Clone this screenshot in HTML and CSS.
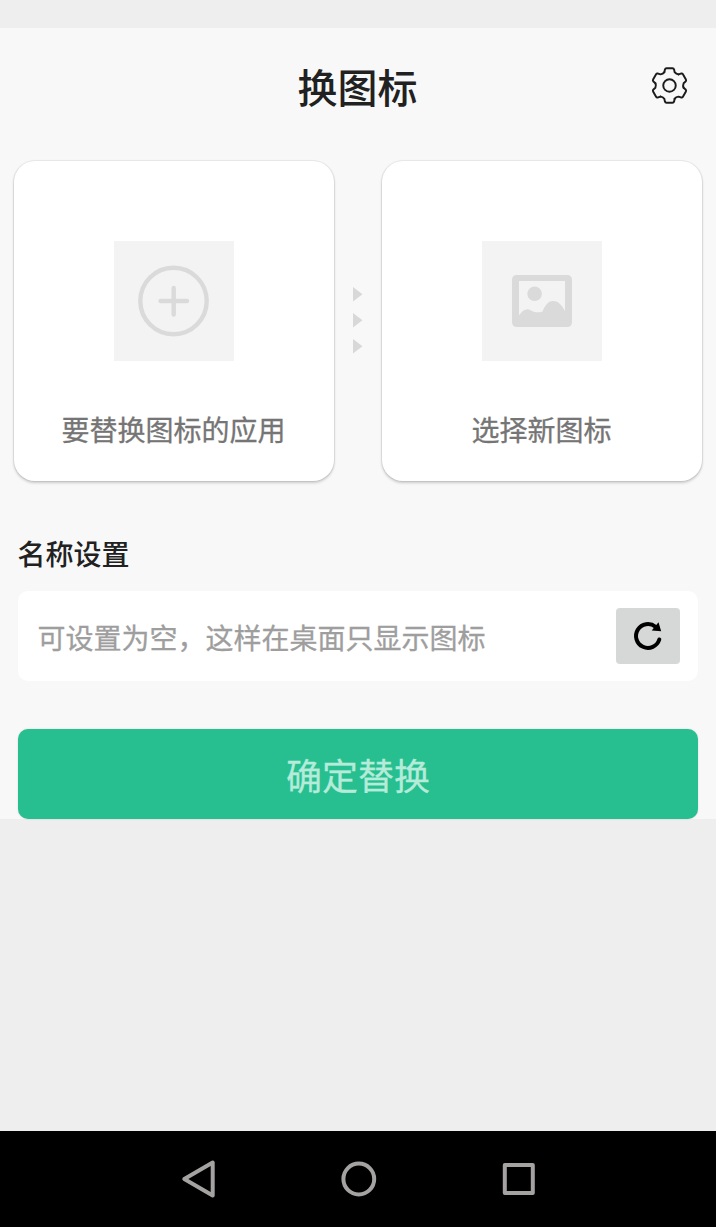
FILE: index.html
```html
<!DOCTYPE html>
<html lang="zh-CN">
<head>
<meta charset="utf-8">
<title>换图标</title>
<link rel="stylesheet" href="styles.css">
</head>
<body>
<div class="screen">
  <div class="status"></div>
  <main class="page">
    <header class="header">
      <h1 class="title">换图标</h1>
      <svg class="gear" viewBox="-20 -20 40 40">
        <defs><path id="tooth" d="M-5-13L-4.5-15.5Q-4.1-16.8-2.9-16.8H2.9Q4.1-16.8 4.5-15.5L5-13Q6.5-11 8.76-10.83"/></defs>
        <use href="#tooth"/><use href="#tooth" transform="rotate(60)"/><use href="#tooth" transform="rotate(120)"/>
        <use href="#tooth" transform="rotate(180)"/><use href="#tooth" transform="rotate(240)"/><use href="#tooth" transform="rotate(300)"/>
        <circle r="6.1"/>
      </svg>
    </header>
    <section class="cards">
      <div class="card">
        <div class="thumb">
          <svg viewBox="0 0 120 120"><g fill="none" stroke="#dadada" stroke-width="4.4" stroke-linecap="round"><circle cx="59.5" cy="60" r="33.2"/><path d="M46.5 60H73M59.7 47V73.500"/></g></svg>
        </div>
        <div class="caption">要替换图标的应用</div>
      </div>
      <svg class="arrows" viewBox="0 0 10 68"><path d="M0 0L9.500 7.300L0 14.600ZM0 26L9.500 33.300L0 40.600ZM0 52L9.500 59.300L0 66.600Z"/></svg>
      <div class="card">
        <div class="thumb">
          <svg viewBox="0 0 120 120"><path fill="#dadada" fill-rule="evenodd" d="M35 34H85Q90 34 90 39V81Q90 86 85 86H35Q30 86 30 81V39Q30 34 35 34ZM37 40V74.500C41 68.500 45 67 49 69.500C52.500 71.500 57 72 60.500 70.500C63.500 63 67 60 71 60C76 60 79 63 83 70V40Z"/><circle cx="52.600" cy="52.800" r="7.300" fill="#dadada"/></svg>
        </div>
        <div class="caption">选择新图标</div>
      </div>
    </section>
    <h2 class="label">名称设置</h2>
    <div class="field">
      <span class="hint">可设置为空，这样在桌面只显示图标</span>
      <div class="reset">
        <svg viewBox="0 0 64 56"><path d="M43.300 31.500A11.900 11.900 0 1 1 39.500 18.800" fill="none" stroke="#000" stroke-width="4" stroke-linecap="round"/><path d="M42.500 14.200L45.200 23.200L35.700 22.500Z"/></svg>
      </div>
    </div>
    <div class="submit">确定替换</div>
  </main>
  <nav class="nav">
    <svg viewBox="0 0 716 96"><g fill="none" stroke="#a5a2a2" stroke-width="4" stroke-linejoin="round"><path d="M212.700 31.500V64.500L184.300 48Z"/><circle cx="358.800" cy="48" r="15.400"/><rect x="504.800" y="34" width="28" height="28"/></g></svg>
  </nav>
</div>
</body>
</html>
```
FILE: styles.css
```css
* { box-sizing: border-box; }
body { margin: 0; font-family: "Noto Sans CJK SC", sans-serif; }
svg { display: block; }
.screen { width: 716px; height: 1227px; background: #eee; display: flex; flex-direction: column; overflow: hidden; }
.status { height: 28px; }
.page { height: 791px; background: #f8f8f8; display: flex; flex-direction: column; }
.header { height: 133px; padding: 0 26px; display: grid; grid-template-columns: 40px 1fr 40px; }
.title { grid-column: 2; margin: 0; padding: 28px 1px 0 0; text-align: center; font-size: 40px; line-height: 60px; font-weight: 500; color: #212121; }
.gear { width: 41px; height: 41px; margin: 37px 0 0 -1px; fill: none; stroke: #1c1c1c; stroke-width: 1.9; stroke-linecap: round; stroke-linejoin: round; }
.cards { display: flex; align-items: center; padding: 0 14px; }
.card { width: 320px; height: 320px; padding-top: 80px; border-radius: 21px; background: #fff; box-shadow: 0 0 1px 1px rgba(0,0,0,.07), 0 2px 3px rgba(0,0,0,.18); display: flex; flex-direction: column; align-items: center; }
.thumb { width: 120px; height: 120px; background: #f3f3f3; }
.caption { margin-top: 47px; padding-right: 1px; font-size: 28px; line-height: 42px; color: #757575; -webkit-text-stroke: .3px #757575; }
.arrows { width: 10px; height: 68px; margin: 0 19px; fill: #d8d8d8; }
.label { margin: 51px 17.5px 0; font-size: 28px; line-height: 42px; font-weight: 500; color: #212121; }
.field { margin: 17px 18px 0; height: 90px; padding: 0 18px 0 19.5px; border-radius: 10px; background: #fff; display: flex; align-items: center; justify-content: space-between; }
.hint { padding-top: 2px; font-size: 28px; line-height: 42px; color: #9e9e9e; -webkit-text-stroke: .3px #9e9e9e; }
.reset { width: 64px; height: 56px; border-radius: 4px; background: #d6d7d7; }
.submit { margin: 48px 18px 0; height: 90px; border-radius: 10px; background: #27bf90; box-shadow: 0 0 2px rgba(0,0,0,.15); color: #b5ebd9; -webkit-text-stroke: .3px #b5ebd9; font-size: 36px; line-height: 90px; text-align: center; }
.nav { margin-top: auto; height: 96px; background: #000; }
```
